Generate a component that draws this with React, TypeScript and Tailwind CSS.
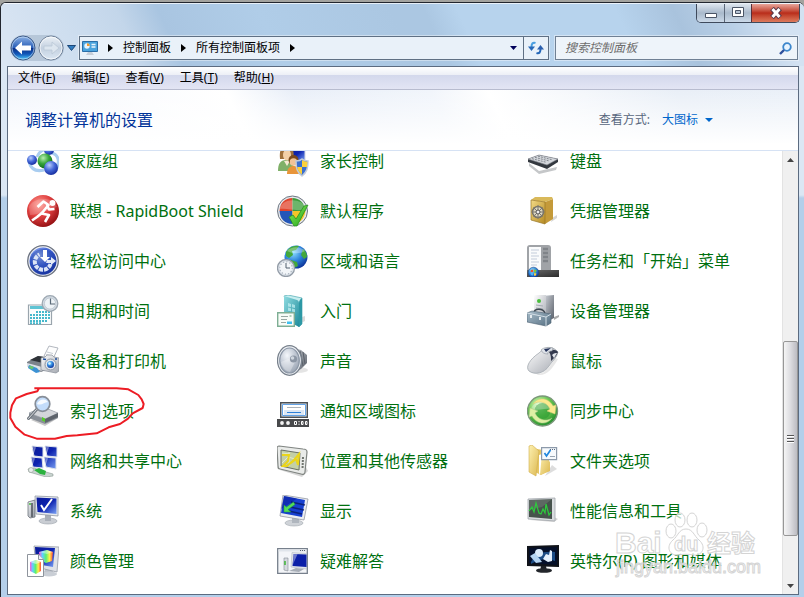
import { ReactNode } from "react";

const menus = [
  { label: "文件", shortcut: "F" },
  { label: "编辑", shortcut: "E" },
  { label: "查看", shortcut: "V" },
  { label: "工具", shortcut: "T" },
  { label: "帮助", shortcut: "H" },
];

const items: { name: string; icon: string; marked?: boolean }[] = [
  { name: "家庭组", icon: "homegroup" },
  { name: "家长控制", icon: "parental" },
  { name: "键盘", icon: "keyboard" },
  { name: "联想 - RapidBoot Shield", icon: "rapidboot" },
  { name: "默认程序", icon: "defaults" },
  { name: "凭据管理器", icon: "credentials" },
  { name: "轻松访问中心", icon: "access" },
  { name: "区域和语言", icon: "region" },
  { name: "任务栏和「开始」菜单", icon: "taskbar" },
  { name: "日期和时间", icon: "datetime" },
  { name: "入门", icon: "started" },
  { name: "设备管理器", icon: "devicemanager" },
  { name: "设备和打印机", icon: "printers" },
  { name: "声音", icon: "sound" },
  { name: "鼠标", icon: "mouse" },
  { name: "索引选项", icon: "indexing", marked: true },
  { name: "通知区域图标", icon: "notification" },
  { name: "同步中心", icon: "sync" },
  { name: "网络和共享中心", icon: "network" },
  { name: "位置和其他传感器", icon: "location" },
  { name: "文件夹选项", icon: "folder" },
  { name: "系统", icon: "system" },
  { name: "显示", icon: "display" },
  { name: "性能信息和工具", icon: "performance" },
  { name: "颜色管理", icon: "color" },
  { name: "疑难解答", icon: "troubleshoot" },
  { name: "英特尔(R) 图形和媒体", icon: "intel" },
];

// gradients shared by all the icons
function Gradients() {
  const radial: [string, string, string, string][] = [
    ["blueBall", "#b9cdfb", "#4468d8", "#12289a"],
    ["greenBall", "#b8efb0", "#35a53a", "#0c6418"],
    ["redBall", "#ff9a90", "#e04040", "#8f0d10"],
    ["globe", "#8fe0ff", "#2f86dd", "#0b2f96"],
    ["syncBall", "#e4ffcf", "#6cc850", "#1f8a2a"],
    ["cone", "#f4f7fb", "#c4cbd6", "#9aa4b2"],
  ];
  const linear: [string, string, string][] = [
    ["silver", "#f6f7f9", "#9096a0"],
    ["silverLight", "#ffffff", "#a4a8b0"],
    ["silverDark", "#c8ccd2", "#565c66"],
    ["gold", "#f3da86", "#b58a22"],
    ["folderFill", "#fdf0b0", "#dcb850"],
    ["teal", "#8fdbe0", "#1f8c9c"],
    ["toolbox", "#a9bdca", "#566f82"],
    ["dark", "#6a6a6a", "#2c2c2c"],
    ["check", "#8cf05a", "#1fa01a"],
  ];
  return (
    <svg width="0" height="0" className="absolute" aria-hidden="true">
      <defs>
        {radial.map(([id, a, b, c]) => (
          <radialGradient key={id} id={id} cx="0.38" cy="0.3" r="0.75">
            <stop offset="0" stopColor={a} />
            <stop offset="0.5" stopColor={b} />
            <stop offset="1" stopColor={c} />
          </radialGradient>
        ))}
        {linear.map(([id, a, b]) => (
          <linearGradient key={id} id={id} x1="0" y1="0" x2="1" y2="1">
            <stop offset="0" stopColor={a} />
            <stop offset="1" stopColor={b} />
          </linearGradient>
        ))}
        <linearGradient id="screen" x1="0" y1="0" x2="1" y2="1">
          <stop offset="0" stopColor="#0a1a96" />
          <stop offset="0.5" stopColor="#0d23b0" />
          <stop offset="1" stopColor="#7ba2f4" />
        </linearGradient>
        <linearGradient id="rainbow" x1="0" y1="0" x2="1" y2="0">
          <stop offset="0" stopColor="#ff5bd8" />
          <stop offset="0.25" stopColor="#5fd0ff" />
          <stop offset="0.5" stopColor="#5bf070" />
          <stop offset="0.75" stopColor="#fff04a" />
          <stop offset="1" stopColor="#ff4a3a" />
        </linearGradient>
        <linearGradient id="backButton" x1="0" y1="0" x2="0" y2="1">
          <stop offset="0" stopColor="#8fb4e6" />
          <stop offset="0.48" stopColor="#2a5fb8" />
          <stop offset="0.5" stopColor="#0a2f86" />
          <stop offset="0.75" stopColor="#1257b8" />
          <stop offset="1" stopColor="#4fd0ff" />
        </linearGradient>
        <linearGradient id="forwardButton" x1="0" y1="0" x2="0" y2="1">
          <stop offset="0" stopColor="#eef3f8" />
          <stop offset="0.5" stopColor="#c3d0df" />
          <stop offset="1" stopColor="#dce8f4" />
        </linearGradient>
      </defs>
    </svg>
  );
}

const icons: Record<string, ReactNode> = {
  homegroup: (
    <>
      <path d="M2 17c2 7 7 10 15 8M24 8c8 1 9 9 5 17M10 12c2-5 6-8 11-8" fill="none" stroke="#a9cdf0" strokeWidth="3" />
      <circle cx="22" cy="5" r="5" fill="url(#blueBall)" />
      <circle cx="5" cy="15" r="5" fill="url(#blueBall)" />
      <circle cx="18" cy="16" r="7.500" fill="url(#greenBall)" />
      <circle cx="24" cy="23" r="7" fill="url(#blueBall)" />
    </>
  ),
  parental: (
    <>
      <path d="M13 2h15v14H13z" fill="url(#screen)" stroke="#d5dae2" />
      <path d="M1 26c0-7 2-11 8-11s8 4 8 11z" fill="#7fb068" />
      <path d="M3 14C2 4 5 1 10 1s8 5 6 13z" fill="#a0703c" />
      <ellipse cx="10" cy="10" rx="4" ry="5.500" fill="#f3cfa8" />
      <path d="M7 16l3 5 3-5z" fill="#f6ead2" />
      <path d="M10 29c0-6 3-8 7-8s6 3 6 8z" fill="#e8953a" />
      <circle cx="16.500" cy="15" r="5" fill="#7b4a1c" />
      <circle cx="16.500" cy="17" r="3.800" fill="#f0c398" />
      <path d="M25 14c2 2 4 2 6 2 0 7-1 11-6 15-5-4-6-8-6-15 2 0 4 0 6-2z" fill="#3a6fd0" stroke="#c4ccd8" strokeWidth="1.500" />
      <path d="M25 15v7h5c0-2 .5-3 .4-5.300-2 0-4-.5-5.400-1.700zM25 22v7.500c-3-2-4.500-5-4.800-7.500z" fill="#fbd13c" />
    </>
  ),
  keyboard: (
    <>
      <path d="M2 18l10 8 18-4-1 3-17 4L2 21z" fill="#6d7278" opacity="0.400" />
      <path d="M1 14l11-4 19 4v3l-11 7L1 17z" fill="#33383f" />
      <path d="M1 14l11-4 19 4-11 6z" fill="#d4d7dc" stroke="#7d828a" strokeWidth="0.600" />
      <path d="M5 13.700l14 3.500M8 12.400l14 3.500M11 11.200l14 3.500" stroke="#858a91" strokeWidth="1" strokeDasharray="2 1" />
    </>
  ),
  rapidboot: (
    <>
      <circle cx="16" cy="16" r="16" fill="url(#redBall)" />
      <path d="M2 12C5 3 25 0 30 12c-8 2-18 8-27 8z" fill="#fff" opacity="0.180" />
      <g fill="none" stroke="#fff" strokeWidth="2.600" strokeLinejoin="round">
        <path d="M10.500 12l6-5.500 5 3.500-7 8.500 7.500 1.500-4 7" />
        <path d="M15.500 17.500L10 22l-5 3.500M20 10l2 4.500 5.500-.5" />
      </g>
      <circle cx="25.500" cy="8" r="3" fill="#fff" />
    </>
  ),
  defaults: (
    <>
      <circle cx="15.500" cy="16" r="15" fill="#e4e7eb" stroke="#6d7580" />
      <path d="M15.500 3v13H2.500C3 8 8 3 15.500 3z" fill="#e0442c" />
      <path d="M15.500 3c7 0 12 5 13 13h-13z" fill="#3c9c3a" />
      <path d="M2.500 16h13v13C8 29 3 24 2.500 16z" fill="#2456b8" />
      <path d="M15.500 16h13c-1 8-6 13-13 13z" fill="#f5c528" />
      <path d="M3 14C4 3 26 2 29 14c-9 3-18-1-26 0z" fill="#fff" opacity="0.250" />
      <path d="M12 22l4-2 3 4 8-13 4-1L20 31h-3z" fill="url(#check)" stroke="#208a1a" strokeWidth="0.700" />
    </>
  ),
  credentials: (
    <>
      <path d="M24 27l6-4v-3l-5 3z" fill="#999" opacity="0.400" />
      <path d="M4 5l4-3h17l1 2-8 3z" fill="#d9b95a" />
      <path d="M18 7l8-3v20l-8 5z" fill="#c49a3a" />
      <path d="M4 5l14 2v22L4 25z" fill="url(#gold)" stroke="#987525" strokeWidth="0.700" />
      <circle cx="11" cy="17" r="5.500" fill="#ddd8c4" stroke="#7a766a" strokeWidth="1.600" />
      <path d="M11 10v14M4.500 17h13M6.500 12.500l9 9M15.500 12.500l-9 9" stroke="#7c796e" />
      <circle cx="11" cy="17" r="2" fill="#eee" stroke="#555" />
    </>
  ),
  access: (
    <>
      <circle cx="16" cy="16" r="15.300" fill="#eef0f4" stroke="#6b7280" strokeWidth="1.300" />
      <circle cx="16" cy="16" r="13.500" fill="url(#blueBall)" />
      <circle cx="16" cy="17" r="13" fill="#1d3fa5" opacity="0.450" />
      <path d="M23.500 19a8 8 0 1 1-11-9.500" fill="none" stroke="#dce5f6" strokeWidth="4" strokeDasharray="4 1" />
      <path d="M16 5h4v7h3l-5 5-5-5h3z" fill="#fff" />
      <path d="M20 15h4v-3l5 4-5 4v-2h-5z" fill="#e7edf8" />
    </>
  ),
  region: (
    <>
      <circle cx="19" cy="12" r="11.500" fill="url(#globe)" />
      <path d="M9 7c3-5 8-7 13-6l-3 4-4 1 1 4-4 3-3-2zM14 15l6 2 1 4-4 2-4-4zM26 4c3 2 4 5 4 8l-3 2-3-4z" fill="#43a83c" />
      <path d="M10 6c5-5 13-5 18 0-5 3-12 3-18 0z" fill="#fff" opacity="0.300" />
      <circle cx="9" cy="23" r="8.500" fill="#dde3ea" stroke="#939ca7" strokeWidth="1.300" />
      <circle cx="9" cy="23" r="6.200" fill="#f2f5f8" stroke="#a3adb8" strokeWidth="1.200" strokeDasharray="1 2.200" />
      <path d="M9 18v5h4" fill="none" stroke="#53606e" />
    </>
  ),
  taskbar: (
    <>
      <path d="M0 3c0-2 1-3 3-3h18c2 0 3 1 3 3v23H0z" fill="#a0a3a7" />
      <path d="M2 2h12v23H2z" fill="#fafbfc" />
      <path d="M4 5h8M4 8h6M4 11h8M4 14h6M4 17h8M4 20h6" stroke="#c3ccda" />
      <path d="M16 4h5M16 8h5M16 12h5M16 16h5" stroke="#808489" strokeWidth="2.500" />
      <path d="M0 25h32v7H0z" fill="url(#dark)" />
      <circle cx="6.500" cy="27.500" r="5.300" fill="url(#globe)" stroke="#1e4a88" strokeWidth="0.600" />
      <path d="M4 25l2.200-.6v2.600H3.500z" fill="#f0502a" />
      <path d="M7 24.500l2.500.4-.5 2.500H7z" fill="#7cc83c" />
      <path d="M3.500 28H6v2.400l-2-.4z" fill="#52b4f4" />
      <path d="M7 28.200h2.400L9 30.500l-2 .3z" fill="#fbd040" />
    </>
  ),
  datetime: (
    <>
      <path d="M1.500 10h23v19.500h-23z" fill="#fbfdfd" stroke="#9aa5ad" strokeWidth="1.200" />
      <path d="M3 11h18v3H3z" fill="#5fc4d4" />
      <g stroke="#45b8cc" strokeWidth="2" strokeDasharray="2 1">
        <path d="M9 17h14" />
        <path d="M3 20h20" />
        <path d="M3 23h20" />
        <path d="M3 26h18" />
        <path d="M3 28.300h12" />
      </g>
      <circle cx="23" cy="8.500" r="7.800" fill="#d3dbe3" stroke="#9da8b2" strokeWidth="1.300" />
      <circle cx="23" cy="8.500" r="5.600" fill="#eef3f7" stroke="#b4bec8" strokeWidth="0.700" />
      <path d="M23.500 3.500v5.500h4.500" fill="none" stroke="#5a6a78" strokeWidth="1.200" />
    </>
  ),
  started: (
    <>
      <path d="M24 28l4-2v-5l-3 1z" fill="#888" opacity="0.300" />
      <path d="M7 1l4-1 14 3v26l-3 3z" fill="#c7eef0" stroke="#62b3ba" strokeWidth="0.800" />
      <path d="M7 1l13 4c2 1 2 2 2 4v23L7 24z" fill="url(#teal)" />
      <path d="M25 3v26l-3 3V8c0-2 1-4 3-5z" fill="#2d98a5" />
      <path d="M11 8l3 1v3l-3-.5zM15 9l3 1v3l-3-.7zM11 12.500l3 .7v3l-3-.5zM15 13.500l3 .7v3l-3-.7z" fill="#c8f2f3" opacity="0.700" />
      <path d="M.700 17.700h16.600v13.600H.700z" fill="#f8fcf7" stroke="#7eae94" strokeWidth="1.400" />
      <path d="M4 21.500h7M4 24.500h6M4 27.500h5" stroke="#98a8a3" />
      <path d="M10 26.500h5v2.500h-5z" fill="#3cc0f0" />
      <path d="M12.500 20h2v2h-2z" fill="#b0d0bc" />
    </>
  ),
  devicemanager: (
    <>
      <path d="M27 25l5-3v-2l-5 2z" fill="#555" opacity="0.500" />
      <path d="M7 1l4-1h16l-2 2z" fill="#e9ebee" />
      <path d="M18 1l9-1v23l-9 5z" fill="url(#silverDark)" />
      <path d="M7 0h12v28L7 24z" fill="url(#silverLight)" />
      <circle cx="12" cy="6" r="2" fill="#49bd3c" />
      <path d="M9 10l7 1M9 13l7 1" stroke="#a5abb3" />
      <path d="M7 18c0-5 9-5 11 0" fill="none" stroke="#3e4750" strokeWidth="1.600" />
      <path d="M0 18l5-2 19 3v9l-5 3L0 27z" fill="url(#toolbox)" stroke="#4c6070" strokeWidth="0.600" />
      <path d="M0 18l19 4v9M19 22l5-3" fill="none" stroke="#d3dee6" />
      <path d="M4 20v3M13 22v3" stroke="#eef2f5" strokeWidth="1.800" />
    </>
  ),
  printers: (
    <>
      <path d="M17 11l5-10 9 2-5 11z" fill="#fdfdfd" stroke="#a9afb8" strokeWidth="0.900" />
      <path d="M20 7l6 1.500M19 9.500l6 1.500" stroke="#c6ccd4" />
      <path d="M0 17l11-6 13 2v10l-10 4L0 21z" fill="#7c828a" />
      <path d="M3 15l8-4 13 2-8 5z" fill="#2f3338" />
      <path d="M0 18l15 4v4L0 21z" fill="#dde1e6" />
      <path d="M2 20l8 3 3 4-4 1-8-5z" fill="#3b92d4" />
      <path d="M3 20.500l4 1.500-2 2.500-3-2z" fill="#6cc66c" />
      <path d="M14 13l4-1 2-2h5l2 2 5 1v13l-3 2-15-3z" fill="url(#silverLight)" stroke="#858c96" strokeWidth="0.700" />
      <circle cx="23.500" cy="19.500" r="5.500" fill="#e2e6ec" stroke="#8a939f" />
      <circle cx="23.500" cy="19.500" r="3.500" fill="url(#globe)" />
      <circle cx="22.500" cy="18.500" r="1.200" fill="#d7f0ff" />
      <path d="M16 14l3 .5M28 14h2" stroke="#1e4d9c" strokeWidth="1.700" />
    </>
  ),
  sound: (
    <>
      <ellipse cx="21" cy="25" rx="10" ry="3" fill="#777" opacity="0.200" />
      <path d="M15 3l9 2 6 5v8l-6 6-10 5z" fill="url(#silverDark)" />
      <path d="M23 6l3 15M26 7l2 12" stroke="#5a616a" />
      <ellipse cx="12.500" cy="15.500" rx="12" ry="14.800" fill="#eef1f5" stroke="#78818c" strokeWidth="1.300" />
      <ellipse cx="12.500" cy="15.500" rx="9.800" ry="12.500" fill="url(#cone)" stroke="#8b96a5" strokeWidth="1.200" />
      <path d="M4 17l12-5 4 1-7 14c-5-1-8-5-9-10z" fill="#fff" opacity="0.300" />
      <circle cx="16.500" cy="14" r="3.600" fill="#8c96a4" />
      <circle cx="15.500" cy="13" r="1.800" fill="#cfd6de" />
    </>
  ),
  mouse: (
    <>
      <path d="M8 28c9 3 14-5 20-15l3 1C26 23 20 31 11 30z" fill="#888" opacity="0.200" />
      <path d="M12 8c7-7 14-7 19-1-1 6-6 9-9 14-5 8-15 9-20 5-4-4 1-12 10-18z" fill="url(#silverLight)" stroke="#9aa0a8" strokeWidth="0.700" />
      <path d="M22 7c3-3 6-3 9 0l-2 4-5 5c0-4 0-6-2-9z" fill="#343a4e" />
      <path d="M14 5c3-3 8-3 12-2l-1 3c-3 0-5 1-4 3-3 0-6-1-7-4z" fill="#dfe3e9" stroke="#8b929b" strokeWidth="0.600" />
      <path d="M17 4l7-1-5 4z" fill="#27355c" />
      <path d="M25 10c2-2 4-2 5-2l-3 5z" fill="#e4e7ec" />
    </>
  ),
  indexing: (
    <>
      <path d="M4 25l14 6 13-8v-2l-8-4z" fill="#666" opacity="0.350" />
      <path d="M2 18l14-6 15 6v5l-13 6L2 23z" fill="#8a9098" />
      <path d="M2 18l14-6 15 6-13 6z" fill="#d4d6da" stroke="#9ba1a9" strokeWidth="0.600" />
      <path d="M18 24l13-6v4l-13 6z" fill="#5d636b" />
      <path d="M15 22l3 1.500V27l-3-1.500z" fill="#55cc2a" />
      <path d="M10 14L1.500 23.500" stroke="#70777f" strokeWidth="3" strokeLinecap="round" />
      <path d="M10 14L1.500 23.500" stroke="#dadde1" strokeLinecap="round" />
      <circle cx="15.500" cy="9" r="7.300" fill="#c3dcfa" stroke="#878e98" strokeWidth="1.700" />
      <path d="M10 9c2-5 8-6 11-2-4 0-6 4-11 2z" fill="#fff" opacity="0.850" />
    </>
  ),
  notification: (
    <>
      <path d="M3.700 7.700h26.600v14.600H3.700z" fill="#e6eaef" stroke="#4b5055" strokeWidth="1.400" />
      <path d="M5.500 9.500h23v11h-23z" fill="#fff" stroke="#64a3e6" />
      <path d="M7 15h20v5H7z" fill="#dce7f4" />
      <path d="M10 12.500h14" stroke="#acb3ba" />
      <path d="M10 17.500h14" stroke="#2d80d8" />
      <path d="M0 24h32v8H0z" fill="#48494b" />
      <circle cx="5" cy="28" r="1.900" fill="#f4f4f4" />
      <circle cx="11" cy="28" r="1.900" fill="#f4f4f4" />
      <g fill="none" stroke="#fff">
        <path d="M17.500 26.500h2v3h-2zM24.500 26.500h1.500v3h-1.500zM28.500 26.500h1.500v3h-1.500z" />
        <path d="M22 26v1.200M22 28.700v1.200" />
      </g>
    </>
  ),
  sync: (
    <>
      <circle cx="15.500" cy="16" r="15" fill="url(#syncBall)" stroke="#7b977a" strokeWidth="1.400" />
      <circle cx="15.500" cy="16" r="8" fill="#2f9c34" opacity="0.700" />
      <path d="M4 15C5 4 26 3 27 15c-7-3-16 1-23 0z" fill="#fff" opacity="0.280" />
      <path d="M6 9c5-7 15-7 20 2l3-1-1 9-8-3 3-2C20 7 12 5 6 9z" fill="#fbe98e" stroke="#d7c878" strokeWidth="0.500" />
      <path d="M25 23c-5 7-15 7-20-2l-3 1 1-9 8 3-3 2c3 7 11 9 17 5z" fill="#dff0a4" stroke="#aac889" strokeWidth="0.500" />
    </>
  ),
  network: (
    <>
      <g fill="url(#screen)" stroke="#dce2ec" strokeWidth="1">
        <path d="M5 1l11 1v10l-9-1zM18 1l12 1v10l-10-1zM4 12l11 1 1 10-10-1zM17 12l12 1v11l-10-2z" />
      </g>
      <path d="M6 2l3 .2-2 6zM19 2l3 .2-2 6zM5 13l3 .2-2 6zM18 13l3 .2-2 6z" fill="#fff" opacity="0.400" />
      <path d="M1 24l6-1 12 4 7 2v2l-7 1-10-3-7-2z" fill="#c9d4d0" stroke="#8c9993" strokeWidth="0.600" />
      <path d="M7 25l5-2 7 3-1 4-5-1z" fill="#2ab23e" />
      <circle cx="4" cy="25" r="2.500" fill="#e9eeec" stroke="#909a96" strokeWidth="0.600" />
    </>
  ),
  location: (
    <>
      <path d="M3 25l22 7 6-6-2-4z" fill="#777" opacity="0.300" />
      <path d="M2 1l24 3c2 0 4 1 4 3l-2 20c0 2-2 3-4 2L3 24c-2 0-2-1-2-3L0 3c0-1 1-2 2-2z" fill="#e9ebe9" stroke="#7f8481" strokeWidth="1.200" />
      <path d="M4 5l19 3-1 17L4 21z" fill="#c3cfa6" stroke="#6a7064" />
      <path d="M5 18l6-6 7 2M12 21V7M5 8l8 1" fill="none" stroke="#e4ebcc" />
      <path d="M5 10h7l-1 6-5 5h4l7-6 5-6-1 11-2-6-5 4" fill="none" stroke="#ead51a" strokeWidth="2" />
      <path d="M26 12l-.5 12" stroke="#70756f" strokeWidth="2" strokeDasharray="2 1" />
    </>
  ),
  folder: (
    <>
      <path d="M18 31l12-7-5-4z" fill="#777" opacity="0.250" />
      <path d="M10 4l12 2v20l-8 4-6-3z" fill="#e6c665" />
      <path d="M12 10l6-2v19l-6 2z" fill="#fff" />
      <path d="M15 8l8 9v9l-10 4z" fill="url(#folderFill)" />
      <path d="M2 1l3-1 7 6-3 25-7-4z" fill="url(#folderFill)" stroke="#d2ae4b" strokeWidth="0.600" />
      <path d="M14.600 2.600h15v12h-15z" fill="#f7fafd" stroke="#8d9aaa" strokeWidth="1.200" />
      <path d="M23 4.500h6" stroke="#5a6c82" strokeDasharray="1 1" />
      <path d="M17.500 8l2 3 4-6" fill="none" stroke="#2287dd" strokeWidth="1.700" />
      <path d="M23 11.500h5" stroke="#9aa6b3" />
    </>
  ),
  system: (
    <>
      <path d="M1 7l7-2v17l-5 1-2-2z" fill="url(#silver)" stroke="#6d737b" strokeWidth="0.800" />
      <path d="M5 8v14" stroke="#4c525a" strokeWidth="1.500" />
      <circle cx="3" cy="9" r="1" fill="#44bd3a" />
      <ellipse cx="21" cy="26" rx="9" ry="3" fill="#c9cdd3" stroke="#999fa8" strokeWidth="0.600" />
      <path d="M18 20h6v6h-6z" fill="#a9afb8" />
      <path d="M8 1l23 1v19L9 19z" fill="#e7eaee" stroke="#9299a3" strokeWidth="0.800" />
      <path d="M9.500 2.500l20 1v15.500l-19-2z" fill="url(#screen)" />
      <path d="M14 10l3 5 8-11" fill="none" stroke="#fff" strokeWidth="2" />
    </>
  ),
  display: (
    <>
      <ellipse cx="17" cy="28" rx="9" ry="3" fill="#cfd3d8" stroke="#a0a6ad" strokeWidth="0.600" />
      <path d="M15 22l7 1v5h-7z" fill="#b0b6be" />
      <path d="M6 0l25 4-4 21-24-4z" fill="#eceef1" stroke="#959ba5" strokeWidth="0.800" />
      <path d="M7 1l21 4-3 17L4 18z" fill="#1740d0" />
      <path d="M7 1l13 2.500L4 14z" fill="#0a1a96" opacity="0.500" />
      <path d="M14 7l14 3M13 12l14 3M12 16l13 3" stroke="#0a1a66" strokeWidth="1.500" opacity="0.800" />
      <path d="M7 17l0-7 2.500 2 7-5 1.500 2.500-7 5 3 2.500z" fill="#53dc5a" stroke="#1f9a38" strokeWidth="0.500" />
    </>
  ),
  performance: (
    <>
      <path d="M3 25l24 2 4-3-4-2z" fill="#777" opacity="0.300" />
      <path d="M1 4l27-1v23L1 24z" fill="#d9dcdf" stroke="#a1a6ab" strokeWidth="0.800" />
      <path d="M2 5l23-1v20L2 22z" fill="#46524c" />
      <path d="M2 5l23-1-10 8-13 3z" fill="#fff" opacity="0.130" />
      <path d="M2 16l3-4 2 5 2-9 3 10 2 1 2-5 2 4 1-9 3 11 2-3" fill="none" stroke="#2ccc3c" strokeWidth="1.200" />
    </>
  ),
  color: (
    <>
      <path d="M18 24h7l2 6h-11z" fill="#bcc1c9" />
      <ellipse cx="22" cy="29" rx="8" ry="2.500" fill="#c9ced5" />
      <path d="M7 1l25 1-2 25L9 22z" fill="#dfe2e7" stroke="#979da7" strokeWidth="0.800" />
      <path d="M8 2l20 1-2 19L9 19z" fill="url(#screen)" />
      <path d="M12 7l8-2 6 2-1 9-6 2-6-3z" fill="url(#rainbow)" />
      <path d="M12 7l8-2 6 2-6 2z" fill="#fff" opacity="0.400" />
      <path d="M.500 9.500h11l5 5v17h-16z" fill="#fff" stroke="#8e949c" />
      <path d="M11.500 9.500v5h5" fill="#eef0f3" stroke="#8e949c" />
      <path d="M3 17l6-2 5 2v9l-5 3-6-3z" fill="url(#rainbow)" />
      <path d="M3 17l6-2 5 2-5 2z" fill="#fff" opacity="0.500" />
    </>
  ),
  troubleshoot: (
    <>
      <path d="M.700 3.700h29.600v24.600H.700z" fill="#f3f5f8" stroke="#77808c" strokeWidth="1.300" />
      <path d="M1.500 4.500h28v2h-28z" fill="#e0e5eb" />
      <path d="M23 5.500h6" stroke="#56606c" strokeDasharray="1 1" />
      <path d="M7 13h4v13l-4-1z" fill="#d5d9df" stroke="#858b94" strokeWidth="0.600" />
      <path d="M8 16v4" stroke="#3cb535" strokeWidth="1.500" />
      <path d="M15 7.500l14.500 1V24L14 22z" fill="#e0e4ea" stroke="#b3bac4" strokeWidth="0.600" />
      <path d="M16.500 9l13 .5V22L15.500 21z" fill="#0b1fa8" />
      <path d="M16.500 9l4 .200-4.500 10z" fill="#fff" opacity="0.400" />
      <path d="M12 26l7-3 8 1-5 3z" fill="#a7adb6" />
    </>
  ),
  intel: (
    <>
      <path d="M0 1l32-1v22L0 21z" fill="#101319" />
      <path d="M2 3l28-1v18L2 18z" fill="#05102a" />
      <path d="M4 17c4-8 12-11 24-10v9c-8-3-16-2-24 3z" fill="#2a6fb8" opacity="0.650" />
      <circle cx="12" cy="8" r="4" fill="#dcecfb" />
      <path d="M3 11l5-3 7 9-6 1z" fill="#b4d4f2" />
      <path d="M16 14l3-5 3 1 1-5 2 1v10l-4 1z" fill="#e4f0fc" />
      <path d="M14 21h5l1 5h-7z" fill="#1c1f24" />
      <ellipse cx="17" cy="25.500" rx="8" ry="2.300" fill="#23262b" />
    </>
  ),
};

function AppIcon({ name }: { name: string }) {
  return (
    <svg viewBox="0 0 32 32" className="h-8 w-8 shrink-0" aria-hidden="true">
      {icons[name]}
    </svg>
  );
}

function Crumb({ children }: { children: ReactNode }) {
  return (
    <>
      <svg width="5" height="8" viewBox="0 0 5 8" aria-hidden="true">
        <path d="M0 0l5 4-5 4z" fill="#000" />
      </svg>
      {children}
    </>
  );
}

function TitleBar() {
  return (
    <div className="flex justify-end pr-1">
      <div className="flex h-[19px] overflow-hidden rounded-b-[5px] border border-t-0 border-[#3f4a5c]">
        <button
          type="button"
          aria-label="最小化"
          className="flex w-7 items-center justify-center border-r border-[#5b6778] bg-linear-to-b from-[#dde5ee] via-[#a9b9cb] via-50% to-[#cbd9e8]"
        >
          <svg width="12" height="14" viewBox="0 0 12 14">
            <path d="M.5 7.500h11v4H.5z" fill="#fff" stroke="#4b5566" />
          </svg>
        </button>
        <button
          type="button"
          aria-label="最大化"
          className="flex w-[27px] items-center justify-center border-r border-[#5b3038] bg-linear-to-b from-[#dde5ee] via-[#a9b9cb] via-50% to-[#cbd9e8]"
        >
          <svg width="12" height="12" viewBox="0 0 12 12">
            <path d="M.5.5h11v9H.5z" fill="#fff" stroke="#4b5566" />
            <path d="M3.500 3.500h5v3h-5z" fill="#b7c4d4" stroke="#4b5566" />
          </svg>
        </button>
        <button
          type="button"
          aria-label="关闭"
          className="flex w-[47px] items-center justify-center bg-linear-to-b from-[#e8a59a] via-[#b92c1a] via-50% to-[#dd7a5c]"
        >
          <svg width="14" height="12" viewBox="0 0 14 12">
            <path d="M3 1.500l8 9M11 1.500l-8 9" stroke="#56384a" strokeWidth="5" />
            <path d="M3.500 2l7 8M10.500 2l-7 8" stroke="#fff" strokeWidth="3" />
          </svg>
        </button>
      </div>
    </div>
  );
}

function NavBar() {
  return (
    <div className="flex items-center gap-[6px] pt-3 pr-[6px] pb-[5px] pl-[9px]">
      <div className="flex items-center">
        <div className="flex items-center gap-[2px] rounded-full bg-[#a4b5c9]/60">
          <button type="button" aria-label="后退">
            <svg width="26" height="26" viewBox="0 0 26 26" className="block">
              <circle cx="13" cy="13" r="12" fill="url(#backButton)" stroke="#3d5a86" />
              <circle cx="13" cy="13" r="11" fill="none" stroke="#cfe2f7" strokeOpacity="0.600" />
              <path d="M5 13l7-6.500v4h9v5h-9v4z" fill="#fff" />
            </svg>
          </button>
          <button type="button" aria-label="前进">
            <svg width="26" height="26" viewBox="0 0 26 26" className="block">
              <circle cx="13" cy="13" r="12" fill="url(#forwardButton)" stroke="#6f8199" />
              <circle cx="13" cy="13" r="11" fill="none" stroke="#fff" strokeOpacity="0.700" />
              <path d="M21 13l-7-6v4H6v4h8v4z" fill="#dde6ef" stroke="#bac8d7" strokeWidth="0.800" />
            </svg>
          </button>
        </div>
        <button type="button" aria-label="最近浏览的位置" className="pl-[3px]">
          <svg width="9" height="6" viewBox="0 0 9 6" className="block">
            <path d="M.5.5h8L4.500 5.500z" fill="#2f7cc0" stroke="#1c4778" />
          </svg>
        </button>
      </div>
      <div className="-ml-[3px] flex h-6 flex-1 border border-[#5f7084] bg-[#e9f1f9] shadow-[0_0_0_1px_rgba(255,255,255,0.4)]">
        <div className="flex flex-1 items-center gap-[10px] pl-[2px] text-xs">
          <svg width="16" height="16" viewBox="0 0 16 16" aria-hidden="true">
            <path d="M.5 1.500h15v10H.5z" fill="#4aa3dd" stroke="#2b6ea8" />
            <circle cx="5" cy="6" r="2.700" fill="#e9f5fd" />
            <path d="M5 6V3.300A2.700 2.700 0 0 1 7.700 6z" fill="#f39a2e" />
            <path d="M9.500 4.500h4M9.500 7h4" stroke="#e9f5fd" strokeWidth="1.300" />
            <path d="M6 12h4l2 3H4z" fill="#c6ced8" />
          </svg>
          <Crumb>
            <a href="#panel">控制面板</a>
          </Crumb>
          <Crumb>
            <a href="#all">所有控制面板项</a>
          </Crumb>
          <Crumb>{null}</Crumb>
        </div>
        <button type="button" aria-label="以前的位置" className="px-[6px]">
          <svg width="7" height="4" viewBox="0 0 7 4">
            <path d="M0 0h7L3.500 4z" fill="#00005a" />
          </svg>
        </button>
        <button
          type="button"
          aria-label="刷新"
          className="flex w-[25px] items-center justify-center border-l border-[#5f7084]"
        >
          <svg width="16" height="14" viewBox="0 0 16 14">
            <path d="M7.500 2C4.500 1 3.500 3 3.500 6" fill="none" stroke="#4a9fe0" strokeWidth="2" />
            <path d="M0 5.500h7L3.500 10z" fill="#2567b8" />
            <path d="M8.500 12c3 1 4-1 4-4" fill="none" stroke="#2567b8" strokeWidth="2" />
            <path d="M9 8.500h7L12.500 4z" fill="#2b5fae" />
          </svg>
        </button>
      </div>
      <form className="flex h-6 w-[243px] items-center border border-[#6f8094] bg-[#eef4fa] pr-[5px] shadow-[0_0_0_1px_rgba(255,255,255,0.4)]">
        <input
          type="text"
          aria-label="搜索控制面板"
          placeholder="搜索控制面板"
          className="min-w-0 flex-1 bg-transparent pl-[9px] text-xs outline-none placeholder:text-[#6d6d6d] placeholder:italic"
        />
        <button type="submit" aria-label="搜索" onClick={(e) => e.preventDefault()}>
          <svg width="13" height="13" viewBox="0 0 13 13" className="block">
            <circle cx="8" cy="5" r="3.800" fill="#e8f4ff" stroke="#3c86cc" strokeWidth="1.800" />
            <path d="M5 8l-4 4" stroke="#2d4f9c" strokeWidth="2.400" />
          </svg>
        </button>
      </form>
    </div>
  );
}

function ScrollBar() {
  return (
    <div className="flex w-4 shrink-0 flex-col border-l border-[#e3e3e3] bg-[#f0f0f0]">
      <button type="button" aria-label="向上滚动" className="flex h-[17px] items-center justify-center">
        <svg width="7" height="4" viewBox="0 0 7 4">
          <path d="M0 4h7L3.500 0z" fill="#444" />
        </svg>
      </button>
      <div className="grow-[174] basis-0" />
      <div className="flex grow-[194] basis-0 flex-col items-center justify-center gap-px rounded-[2px] border border-[#979797] bg-linear-to-r from-[#f5f5f5] via-[#dcdce0] via-50% to-[#bcbcc2]">
        <div className="h-[2px] w-[7px] border-b border-white bg-[#555]" />
        <div className="h-[2px] w-[7px] border-b border-white bg-[#555]" />
        <div className="h-[2px] w-[7px] border-b border-white bg-[#555]" />
      </div>
      <div className="grow-[41] basis-0" />
      <button type="button" aria-label="向下滚动" className="flex h-[17px] items-center justify-center">
        <svg width="7" height="4" viewBox="0 0 7 4">
          <path d="M0 0h7L3.500 4z" fill="#444" />
        </svg>
      </button>
    </div>
  );
}

// hand-drawn red loop around an entry
function RedLoop() {
  return (
    <svg
      width="138"
      height="56"
      viewBox="24 288 414 168"
      className="pointer-events-none absolute top-0 -left-[19px] z-10"
      aria-hidden="true"
    >
      <path
        d="M103 295H350L385 298 415 315 425 328 431 342 428 354 398 370 384 386 360 402 326 412 290 430 232 436 200 438 165 446H110L74 434 46 410 31 384V368L36 346 48 325 80 312 112 304 117 295"
        fill="none"
        stroke="#ed1c24"
        strokeWidth="6"
        strokeLinejoin="round"
      />
    </svg>
  );
}

function Watermark() {
  return (
    <svg
      width="150"
      height="72"
      viewBox="0 0 150 72"
      className="pointer-events-none absolute right-[35px] bottom-[13px]"
    >
      <g fill="#fff" fillOpacity="0.700" stroke="#d4d4d4" strokeWidth="1">
        <text x="2" y="44" className="font-['Liberation_Sans'] text-[30px] font-bold">
          Bai
        </text>
        <ellipse cx="58" cy="22" rx="5" ry="7" />
        <ellipse cx="67" cy="11" rx="5" ry="7" />
        <ellipse cx="79" cy="11" rx="5" ry="7" />
        <ellipse cx="89" cy="21" rx="5" ry="7" />
        <path d="M73 20c7 0 8 7 13 11 8 7 3 16-5 15-5-1-11-1-16 0-8 1-13-8-5-15 5-4 6-11 13-11z" />
        <text x="61" y="42" className="font-['Liberation_Sans'] text-[20px] font-bold">
          du
        </text>
        <text x="94" y="43" className="font-['Noto_Sans_CJK_SC'] text-[24px] font-bold">
          经验
        </text>
        <text x="3" y="64" className="font-['Liberation_Sans'] text-[18px]">
          jingyan.baidu.com
        </text>
      </g>
    </svg>
  );
}

export default function App() {
  return (
    <div className="bg-[#a3a39f] pt-[2px] font-['Noto_Sans','Noto_Sans_CJK_SC',sans-serif] text-black">
      <Gradients />
      <div className="flex h-[calc(100vh-2px)] flex-col overflow-hidden rounded-t-[6px] border-t border-l border-[#22262e] bg-[linear-gradient(to_bottom,#dbe7f4_192px,#b4cfea_195px)]">
        <div className="border-t border-white/70 bg-[linear-gradient(65deg,#dbe6f3_0%,#cbdcee_12%,#c3d6ea_17%,#a9c5e1_22%,#b0cde8_34%,#abc7e2_50%,#abc7e2_54%,#b7d3ed_58%,#b7d3ed_77%,#a9c3dd_84%,#b9cfe6_90%,#d3e2f2_96%)]">
          <TitleBar />
          <NavBar />
        </div>

        <div className="mr-[5px] mb-[2px] ml-[6px] flex min-h-0 flex-1 flex-col border border-[#5c6b80] bg-white">
          <nav className="flex h-[23px] items-center gap-4 border-b border-[#b8bccf] bg-[linear-gradient(to_bottom,#ffffff_0px,#eceff6_8px,#d3d8ec_8px,#e3e5f4_22px)] pl-[10px] text-xs">
            {menus.map((menu) => (
              <button type="button" key={menu.label}>
                {menu.label}(<u>{menu.shortcut}</u>)
              </button>
            ))}
          </nav>

          <header className="flex h-[61px] items-center justify-between border-b border-[#d6e2f4] bg-[linear-gradient(to_bottom,transparent,#ffffff_90%),linear-gradient(65deg,#f1f5fc_0%,#fbfcfe_20%,#ffffff_30%,#e9eff8_38%,#f1f5fb_55%,#ffffff_62%,#e9eff7_85%,#eaf0f8_100%)] pr-[85px] pl-[17px]">
            <h1 className="text-base text-[#003399]">调整计算机的设置</h1>
            <div className="relative flex items-center gap-3 text-xs">
              <label htmlFor="view" className="text-[#57667c]">
                查看方式:
              </label>
              <select
                id="view"
                className="appearance-none bg-transparent pr-[14px] text-[#0066cc] outline-none"
              >
                <option>大图标</option>
                <option>小图标</option>
                <option>类别</option>
              </select>
              <svg
                width="8"
                height="4"
                viewBox="0 0 8 4"
                className="pointer-events-none absolute top-1/2 right-0 -translate-y-1/2"
              >
                <path d="M0 0h8L4 4z" fill="#0066cc" />
              </svg>
            </div>
          </header>

          <div className="relative flex min-h-0 flex-1">
            <main className="flex-1 overflow-hidden pl-[19px]">
              <ul className="-mt-[15px] grid grid-cols-[repeat(auto-fill,250px)]">
                {items.map((item) => (
                  <li key={item.name} className="relative h-[50px]">
                    <a
                      href={`#${item.icon}`}
                      className="flex h-full items-center gap-[11px] text-base whitespace-nowrap text-[#00700f]"
                    >
                      <AppIcon name={item.icon} />
                      {item.name}
                    </a>
                    {item.marked && <RedLoop />}
                  </li>
                ))}
              </ul>
            </main>
            <Watermark />
            <ScrollBar />
          </div>
        </div>
      </div>
    </div>
  );
}
